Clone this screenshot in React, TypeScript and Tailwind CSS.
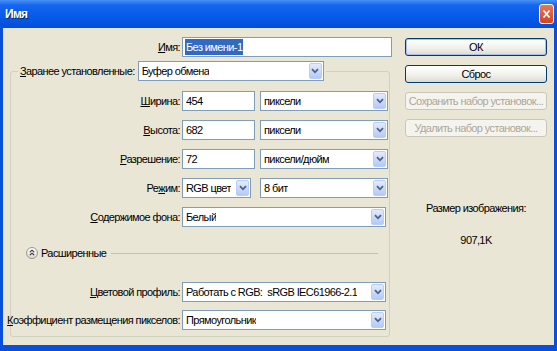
import type { ReactNode } from "react";

function Chevron() {
  return (
    <svg width="8" height="6" viewBox="0 0 8 6">
      <path d="M1 1.2 L4 4.3 L7 1.2" fill="none" stroke="#4d6185" strokeWidth="1.8" />
    </svg>
  );
}

function Select({ value, w }: { value: string; w: string }) {
  return (
    <div className={`${w} h-[20px] bg-white border border-[#7f9db9] flex items-center justify-between pl-[3px] pr-[1px] shrink-0`}>
      <span className="whitespace-pre overflow-hidden">{value}</span>
      <span className="w-[13px] h-[16px] rounded-[2px] border border-[#b9cdf7] bg-[linear-gradient(to_bottom,#e3ebfd,#b4c9f7)] flex items-center justify-center shrink-0">
        <Chevron />
      </span>
    </div>
  );
}

function Input({ value, w }: { value: string; w: string }) {
  return (
    <div className={`${w} h-[20px] bg-white border border-[#7f9db9] flex items-center pl-[3px] shrink-0`}>
      {value}
    </div>
  );
}

function Row({ label, children }: { label: ReactNode; children: ReactNode }) {
  return (
    <div className="flex items-center h-[20px] gap-[2px]">
      <div className="w-[169px] shrink-0 flex justify-end whitespace-nowrap">
        <span>{label}</span>
      </div>
      {children}
    </div>
  );
}

function Button({ children, disabled, primary }: { children: ReactNode; disabled?: boolean; primary?: boolean }) {
  if (disabled) {
    return (
      <div className="w-[142px] h-[18px] rounded-[3px] border border-[#c9c7ba] bg-[#f4f3ee] text-[#aca899] flex items-center justify-center">
        {children}
      </div>
    );
  }
  return (
    <div
      className={`w-[142px] h-[18px] rounded-[3px] border border-[#003c74] bg-[linear-gradient(to_bottom,#ffffff,#f0f0ea_60%,#dcdad0)] flex items-center justify-center ${
        primary ? "shadow-[inset_0_0_0_1px_#a9c1ee]" : ""
      }`}
    >
      {children}
    </div>
  );
}

export default function App() {
  return (
    <div className="w-[557px] h-[351px] bg-[#0a4fdc] flex flex-col font-['Liberation_Sans',Arial,sans-serif] text-[11px] tracking-[-0.6px] text-black">
      {/* title bar */}
      <div className="h-[28px] shrink-0 flex items-center justify-between pl-[5px] pr-[3px] bg-[linear-gradient(to_bottom,#4a92f5,#1466f0_18%,#075ae8_60%,#034ddb)]">
        <span className="text-white font-bold text-[12px] tracking-[-0.7px] [text-shadow:1px_1px_0_#0a246a]">Имя</span>
        <div className="w-[15px] h-[20px] rounded-[3px] border border-white bg-[linear-gradient(to_bottom,#e9775a,#d6421e)] flex items-center justify-center">
          <svg width="9" height="10" viewBox="0 0 9 10">
            <path d="M1.5 1.5 L7.5 8.5 M7.5 1.5 L1.5 8.5" stroke="white" strokeWidth="1.8" />
          </svg>
        </div>
      </div>

      {/* body */}
      <div className="flex-1 mx-[3px] mb-[6px] bg-[#e9e6d6] flex">
        <div className="w-[389px] pl-[7px] pt-[9px] flex flex-col">
          <div className="flex items-center h-[20px] gap-[2px]">
            <div className="w-[170px] text-right">
              <u>И</u>мя:
            </div>
            <div className="w-[210px] h-[20px] bg-white border border-[#7f9db9] flex items-center pl-[2px]">
              <span className="bg-[#316ac5] text-white px-[1px]">Без имени-1</span>
            </div>
          </div>

          <fieldset className="mt-[4px] w-[380px] h-[276px] border border-[#d0d0bf] rounded-[3px]">
            <legend className="ml-[7px] px-[2px] flex items-center gap-[3px]">
              <span>
                <u>З</u>аранее установленные:
              </span>
              <Select value="Буфер обмена" w="w-[186px]" />
            </legend>

            <div className="mt-[10px] flex flex-col gap-[9px]">
              <Row label={<><u>Ш</u>ирина:</>}>
                <Input value="454" w="w-[73px]" />
                <div className="w-[1px]" />
                <Select value="пиксели" w="w-[128px]" />
              </Row>
              <Row label={<><u>В</u>ысота:</>}>
                <Input value="682" w="w-[73px]" />
                <div className="w-[1px]" />
                <Select value="пиксели" w="w-[128px]" />
              </Row>
              <Row label={<><u>Р</u>азрешение:</>}>
                <Input value="72" w="w-[73px]" />
                <div className="w-[1px]" />
                <Select value="пиксели/дюйм" w="w-[128px]" />
              </Row>
              <Row label={<>Ре<u>ж</u>им:</>}>
                <Select value="RGB цвет" w="w-[69px]" />
                <div className="w-[5px]" />
                <Select value="8 бит" w="w-[128px]" />
              </Row>
              <Row label={<><u>С</u>одержимое фона:</>}>
                <Select value="Белый" w="w-[204px]" />
              </Row>
            </div>

            <div className="mt-[19px] h-[14px] flex items-center pl-[15px]">
              <svg width="12" height="12" viewBox="0 0 12 12" className="shrink-0">
                <defs>
                  <linearGradient id="cg" x1="0" y1="0" x2="0" y2="1">
                    <stop offset="0" stopColor="#ffffff" />
                    <stop offset="1" stopColor="#d8d6cc" />
                  </linearGradient>
                </defs>
                <circle cx="6" cy="6" r="5.5" fill="url(#cg)" stroke="#9a9890" />
                <path d="M3.8 5.2 L6 3.2 L8.2 5.2 M3.8 8.2 L6 6.2 L8.2 8.2" fill="none" stroke="#303030" strokeWidth="1.1" />
              </svg>
              <span className="ml-[3px]">Расширенные</span>
              <div className="ml-[5px] flex-1 mr-[11px] border-t border-[#c4c1b0]" />
            </div>

            <div className="mt-[22px] flex flex-col gap-[8px]">
              <Row label={<><u>Ц</u>ветовой профиль:</>}>
                <Select value="Работать с RGB:  sRGB IEC61966-2.1" w="w-[204px]" />
              </Row>
              <Row label={<><u>К</u>оэффициент размещения пикселов:</>}>
                <Select value="Прямоугольник" w="w-[204px]" />
              </Row>
            </div>
          </fieldset>
        </div>

        <div className="ml-[13px] pt-[10px] flex flex-col gap-[9px]">
          <Button primary>ОК</Button>
          <Button>Сброс</Button>
          <Button disabled>Сохранить набор установок...</Button>
          <Button disabled>Удалить набор установок...</Button>
          <div className="mt-[54px] flex flex-col items-center gap-[15px]">
            <span>Размер изображения:</span>
            <span>907,1K</span>
          </div>
        </div>
      </div>
    </div>
  );
}
